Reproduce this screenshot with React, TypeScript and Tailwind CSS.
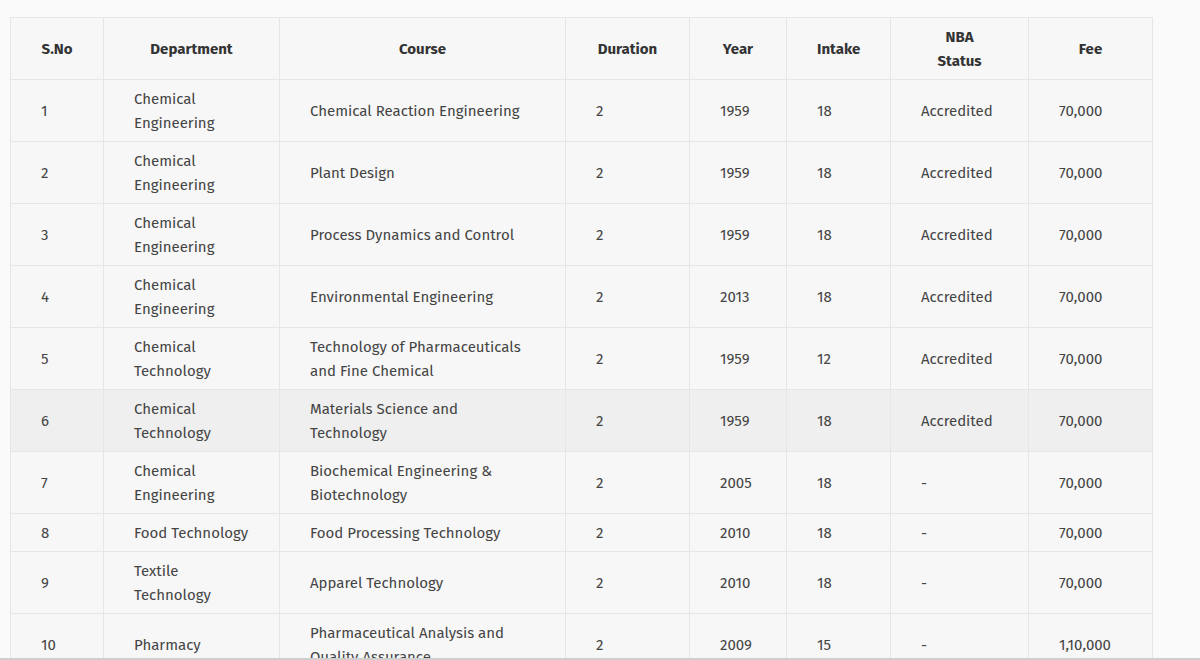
const rows = [
  ["1","Chemical Engineering","Chemical Reaction Engineering","2","1959","18","Accredited","70,000"],
  ["2","Chemical Engineering","Plant Design","2","1959","18","Accredited","70,000"],
  ["3","Chemical Engineering","Process Dynamics and Control","2","1959","18","Accredited","70,000"],
  ["4","Chemical Engineering","Environmental Engineering","2","2013","18","Accredited","70,000"],
  ["5","Chemical Technology","Technology of Pharmaceuticals and Fine Chemical","2","1959","12","Accredited","70,000"],
  ["6","Chemical Technology","Materials Science and Technology","2","1959","18","Accredited","70,000"],
  ["7","Chemical Engineering","Biochemical Engineering & Biotechnology","2","2005","18","-","70,000"],
  ["8","Food Technology","Food Processing Technology","2","2010","18","-","70,000"],
  ["9","Textile Technology","Apparel Technology","2","2010","18","-","70,000"],
  ["10","Pharmacy","Pharmaceutical Analysis and Quality Assurance","2","2009","15","-","1,10,000"],
];
const widths = [93,176,286,124,97,104,138,124];
const heads = ["S.No","Department","Course","Duration","Year","Intake","NBA Status","Fee"];

export default function App() {
  return (
    <div className="w-[1200px] h-[660px] bg-[#fafafa] overflow-hidden flex flex-col" style={{fontFamily:'"Fira Sans","Open Sans",sans-serif'}}>
      <div className="flex-1 overflow-hidden pt-[17px] pl-[10px]">
        <table className="table-fixed border-collapse bg-[#f7f7f7] text-[#444] text-[15px] leading-[24px]" style={{width:1142}}>
          <colgroup>
            {widths.map((w,i)=><col key={i} style={{width:w}} />)}
          </colgroup>
          <thead>
            <tr className="h-[62px]">
              {heads.map((h,i)=>(
                <th key={i} className="border border-[#e6e6e6] font-bold text-[#333] text-center px-[30px]">
                  {h==="NBA Status"?<>NBA<br/>Status</>:h}
                </th>
              ))}
            </tr>
          </thead>
          <tbody>
            {rows.map((r,ri)=>(
              <tr key={ri} className={ri===5?"bg-[#efefef]":""}>
                {r.map((c,ci)=>(
                  <td key={ci} className={"border border-[#e6e6e6] align-middle pt-[7px] pb-[6px] pl-[30px] " + (ci===1?"pr-[22px]":ci===2?"pr-[40px]":"pr-[10px]")}>{c}</td>
                ))}
              </tr>
            ))}
          </tbody>
        </table>
      </div>
      <div className="h-[2px] bg-[#cfcfcf]" />
    </div>
  );
}
